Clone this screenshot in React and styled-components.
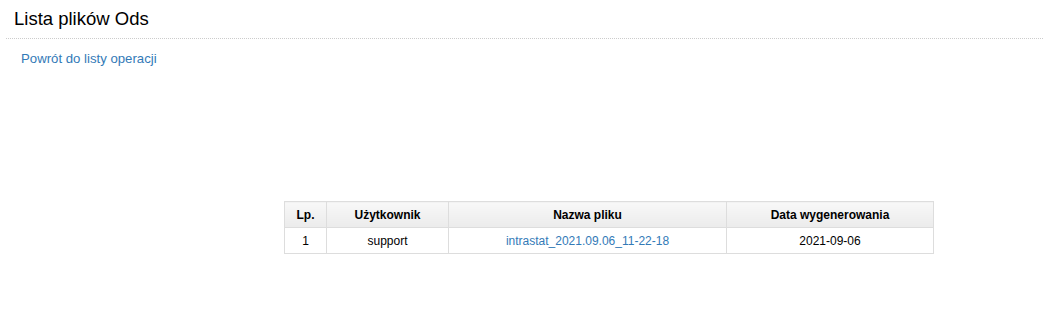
import React from "react";
import styled, { createGlobalStyle } from "styled-components";

const GlobalStyle = createGlobalStyle`
  body {
    margin: 0;
    background: #fff;
    font-family: "Liberation Sans", Arial, sans-serif;
    color: #000;
  }
`;

const Header = styled.div`
  margin: 0 1px 0 6px;
  padding: 7px 0 7px 8px;
  border-bottom: 1px dotted #ccc;
`;

const Title = styled.h1`
  margin: 0;
  font-size: 18.5px;
  line-height: 24px;
  font-weight: normal;
`;

const Content = styled.div`
  padding: 10px 21px 0;
`;

const BackLink = styled.a`
  display: inline-block;
  font-size: 13.2px;
  line-height: 18px;
  color: #337ab7;
  text-decoration: none;
`;

const TableWrap = styled.div`
  margin: 133px 0 0 263px;
`;

const Table = styled.table`
  border-collapse: collapse;
  table-layout: fixed;
  font-size: 12px;
  width: 649px;
`;

const Th = styled.th`
  box-sizing: border-box;
  width: ${(p) => p.$w}px;
  height: 26px;
  padding: 0 5px;
  border: 1px solid #ddd;
  background: linear-gradient(#f8f8f8, #ebebeb);
  font-weight: bold;
  text-align: center;
`;

const Td = styled.td`
  height: 25px;
  padding: 0 5px;
  border: 1px solid #ddd;
  text-align: center;
`;

const FileLink = styled.a`
  color: #337ab7;
  text-decoration: none;
`;

const rows = [
  { lp: 1, user: "support", file: "intrastat_2021.09.06_11-22-18", date: "2021-09-06" },
];

export default function App() {
  return (
    <>
      <GlobalStyle />
      <Header>
        <Title>Lista plików Ods</Title>
      </Header>
      <Content>
        <BackLink href="#">Powrót do listy operacji</BackLink>
        <TableWrap>
          <Table>
            <thead>
              <tr>
                <Th $w={42}>Lp.</Th>
                <Th $w={122}>Użytkownik</Th>
                <Th $w={278}>Nazwa pliku</Th>
                <Th $w={207}>Data wygenerowania</Th>
              </tr>
            </thead>
            <tbody>
              {rows.map((r) => (
                <tr key={r.lp}>
                  <Td>{r.lp}</Td>
                  <Td>{r.user}</Td>
                  <Td>
                    <FileLink href="#">{r.file}</FileLink>
                  </Td>
                  <Td>{r.date}</Td>
                </tr>
              ))}
            </tbody>
          </Table>
        </TableWrap>
      </Content>
    </>
  );
}
